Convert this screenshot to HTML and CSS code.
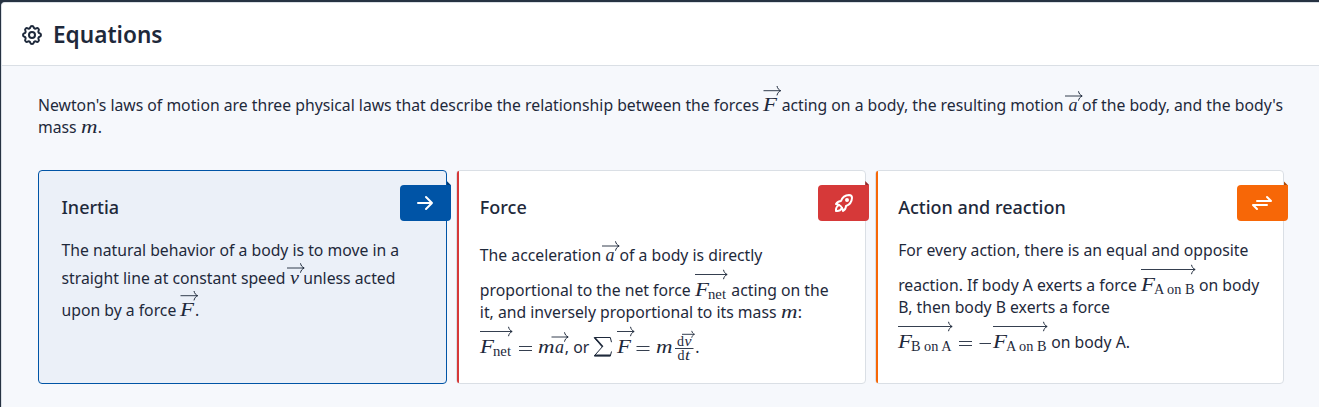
FILE: index.html
```html
<!DOCTYPE html>
<html lang="en">
<head>
<meta charset="utf-8">
<title>Equations</title>
<link rel="stylesheet" href="styles.css">
</head>
<body>
<svg class="defs" aria-hidden="true">
  <defs>
    <marker id="head" viewBox="0 0 6 12" refX="5.4" refY="6" markerWidth="6" markerHeight="12" markerUnits="userSpaceOnUse" orient="auto">
      <path d="M1.9 1.3C2.4 3.6 3.5 5.1 5.6 6C3.5 6.9 2.4 8.4 1.9 10.7" fill="none" stroke="#1e293b" stroke-width="1"/>
    </marker>
    <marker id="head-small" viewBox="0 0 6 12" refX="5.4" refY="6" markerWidth="4.4" markerHeight="8.8" markerUnits="userSpaceOnUse" orient="auto">
      <path d="M1.9 1.3C2.4 3.6 3.5 5.1 5.6 6C3.5 6.9 2.4 8.4 1.9 10.7" fill="none" stroke="#1e293b" stroke-width="1.2"/>
    </marker>
  </defs>
</svg>
<main class="panel">
  <header class="panel-header">
    <svg class="icon" viewBox="0 0 24 24"><path d="M10.325 4.317c.426 -1.756 2.924 -1.756 3.35 0a1.724 1.724 0 0 0 2.573 1.066c1.543 -.94 3.31 .826 2.37 2.37a1.724 1.724 0 0 0 1.065 2.572c1.756 .426 1.756 2.924 0 3.35a1.724 1.724 0 0 0 -1.066 2.573c.94 1.543 -.826 3.31 -2.37 2.37a1.724 1.724 0 0 0 -2.572 1.065c-.426 1.756 -2.924 1.756 -3.35 0a1.724 1.724 0 0 0 -2.573 -1.066c-1.543 .94 -3.31 -.826 -2.37 -2.37a1.724 1.724 0 0 0 -1.065 -2.572c-1.756 -.426 -1.756 -2.924 0 -3.35a1.724 1.724 0 0 0 1.066 -2.573c-.94 -1.543 .826 -3.31 2.37 -2.37c1 .608 2.296 .07 2.572 -1.065"/><circle cx="12" cy="12" r="3"/></svg>
    <h1>Equations</h1>
  </header>
  <div class="panel-body">
    <p class="intro">
      <span class="line">Newton's laws of motion are three physical laws that describe the relationship between the forces <svg class="math w-f"><text class="v" x="0" y="12" textLength="14">F</text><path class="arrow" d="M.5 -8.3H17.5"/></svg> acting on a body, the resulting motion <svg class="math w-a"><text class="v" x=".5" y="12" textLength="9">a</text><path class="arrow" d="M-3 -3H14"/></svg> of the body, and the body's</span>
      <span class="line">mass <svg class="math w-m"><text class="v" x="0" y="12" textLength="16.5">m</text></svg>.</span>
    </p>
    <div class="cards">
      <section class="card active">
        <div class="ribbon blue"><svg class="icon" viewBox="0 0 24 24"><path d="M5 12h14M13 18l6 -6M13 6l6 6"/></svg></div>
        <h2>Inertia</h2>
        <p>
          <span class="line">The natural behavior of a body is to move in a</span>
          <span class="line gap6">straight line at constant speed <svg class="math w-v"><text class="v" x="0" y="12" textLength="9">v</text><path class="arrow" d="M-3 -4H14"/></svg> unless acted</span>
          <span class="line gap10">upon by a force <svg class="math w-f"><text class="v" x="0" y="12" textLength="14">F</text><path class="arrow" d="M.5 -8.3H17.5"/></svg>.</span>
        </p>
      </section>
      <section class="card red-edge">
        <div class="ribbon red"><svg class="icon" viewBox="0 0 24 24"><path d="M4 13a8 8 0 0 1 7 7a6 6 0 0 0 3 -5a9 9 0 0 0 6 -8a3 3 0 0 0 -3 -3a9 9 0 0 0 -8 6a6 6 0 0 0 -5 3"/><path d="M7 14a6 6 0 0 0 -3 6a6 6 0 0 0 6 -3"/><circle cx="15" cy="9" r="1"/></svg></div>
        <h2>Force</h2>
        <p>
          <span class="line gap5">The acceleration <svg class="math w-a"><text class="v" x=".5" y="12" textLength="9">a</text><path class="arrow" d="M-3 -3H14"/></svg> of a body is directly</span>
          <span class="line gap13">proportional to the net force <svg class="math w-fnet"><text class="v" x="0" y="12" textLength="14">F</text><text class="s" x="13" y="15" textLength="18">net</text><path class="arrow" d="M0 -9.5H32"/></svg> acting on the</span>
          <span class="line">it, and inversely proportional to its mass <svg class="math w-m"><text class="v" x="0" y="12" textLength="16.5">m</text></svg>:</span>
          <span class="line gap13"><svg class="math w-net-eq"><text class="v" x="0" y="12" textLength="14">F</text><text class="s" x="13" y="15" textLength="18">net</text><path class="arrow" d="M0 -9.5H32"/><path class="rule" d="M39 5.5H52M39 9.5H52"/><text class="v" x="58" y="12" textLength="16.5">m</text><text class="v" x="75" y="12" textLength="9">a</text><path class="arrow" d="M71.5 -4H88"/></svg>, or <svg class="math w-sum"><path class="sigma" d="M18.5 1.2L17.3 -3.5H1.2L9.3 5.8L1.2 15H17.3L18.5 10.5"/><path class="sigma-bold" d="M1.8 -3.2L9.8 5.8M1.8 14.4H17.5"/><text class="v" x="24" y="12" textLength="14">F</text><path class="arrow" d="M24 -9.5H41"/><path class="rule" d="M43.5 5.5H56.5M43.5 9.5H56.5"/><text class="v" x="63" y="12" textLength="16.5">m</text><text class="s" x="84" y="4.8" textLength="7">d</text><text class="sv" x="91.5" y="4.8" textLength="7">v</text><path class="arrow small" d="M89 -6.7H101.3"/><path class="rule" d="M82 7.5H100.5"/><text class="s" x="84.5" y="18.8" textLength="7">d</text><text class="sv" x="92" y="18.8" textLength="5">t</text></svg>.</span>
        </p>
      </section>
      <section class="card orange-edge">
        <div class="ribbon orange"><svg class="icon" viewBox="0 0 24 24"><path d="M7 10h14l-4 -4M17 14h-14l4 4"/></svg></div>
        <h2>Action and reaction</h2>
        <p>
          <span class="line">For every action, there is an equal and opposite</span>
          <span class="line gap13">reaction. If body A exerts a force <svg class="math w-fab"><text class="v" x="0" y="12" textLength="14">F</text><text class="s" x="13" y="15" textLength="40.5">A on B</text><path class="arrow" d="M0 -9.5H54"/></svg> on body</span>
          <span class="line">B, then body B exerts a force</span>
          <span class="line gap13"><svg class="math w-fba"><text class="v" x="0" y="12" textLength="14">F</text><text class="s" x="13" y="15" textLength="40.5">B on A</text><path class="arrow" d="M0 -9.5H54"/><path class="rule" d="M61 5.5H74M61 9.5H74M81.5 7.5H93"/><text class="v" x="95" y="12" textLength="14">F</text><text class="s" x="108" y="15" textLength="40.5">A on B</text><path class="arrow" d="M95 -9.5H149"/></svg> on body A.</span>
        </p>
      </section>
    </div>
  </div>
</main>
<script src="math.js"></script>
</body>
</html>
```
FILE: math.js
```js
// Stretch the glyphs themselves, not only the gaps, to each symbol's measured width.
document.querySelectorAll('.math text').forEach(function (t) {
  t.setAttribute('lengthAdjust', 'spacingAndGlyphs');
});
```
FILE: styles.css
```css
* { box-sizing: border-box; }
body {
  margin: 0;
  padding: 2px 0 0 1px;
  height: 407px;
  overflow: hidden;
  background: #263242;
  color: #1e293b;
  font: 15.75px/22px "Noto Sans", sans-serif;
}
.defs { position: absolute; width: 0; height: 0; }
.panel {
  height: 405px;
  background: #f6f8fc;
  border-left: 1px solid #dadfe5;
  border-top: 1px solid #dadfe5;
  border-top-left-radius: 4px;
  overflow: hidden;
}
.panel-header {
  display: flex;
  align-items: center;
  gap: 9px;
  height: 63px;
  padding: 1px 18px 0;
  background: #fff;
  border-bottom: 1px solid #dadfe5;
}
h1 { margin: 0; font-size: 22.6px; line-height: 32px; font-weight: 600; }
.icon {
  display: block;
  width: 24px;
  height: 24px;
  fill: none;
  stroke: currentColor;
  stroke-width: 2;
  stroke-linecap: round;
  stroke-linejoin: round;
}
.panel-body { padding: 28px 35px 0 36px; }
p { margin: 0; }
.line { display: block; height: 22px; white-space: nowrap; box-sizing: content-box; }
.gap5 { padding-top: 5px; }
.gap6 { padding-top: 6px; }
.gap10 { padding-top: 10px; }
.gap13 { padding-top: 13px; }
.intro { height: 76px; }
.cards { display: grid; grid-template-columns: repeat(3, minmax(0, 1fr)); gap: 9px; }
.card {
  position: relative;
  height: 214px;
  padding: 24px 22px 0 22.5px;
  background: #fff;
  border: 1px solid #dadfe5;
  border-radius: 4px;
}
.card.active { background: #ebf0f8; border-color: #0054a6; }
.red-edge::before,
.orange-edge::before {
  content: "";
  position: absolute;
  top: 0;
  bottom: 0;
  left: 0;
  width: 2px;
  border-radius: 2px 0 0 2px;
  background: #d63939;
}
.orange-edge::before { background: #f76707; }
h2 { margin: 0 0 20px; font-size: 18px; line-height: 24px; font-weight: 500; }
.ribbon {
  position: absolute;
  top: 14px;
  right: -4.5px;
  display: flex;
  align-items: center;
  justify-content: center;
  width: 51px;
  height: 36px;
  border-radius: 4px 0 4px 4px;
  color: #fff;
}
.ribbon::before {
  content: "";
  position: absolute;
  right: 0;
  bottom: 100%;
  width: 4px;
  height: 4px;
  background: inherit;
  filter: brightness(.7);
  clip-path: polygon(0 0, 100% 100%, 0 100%);
}
.blue { background: #0054a6; }
.red { background: #d63939; }
.orange { background: #f76707; }

/* Formula boxes sit with their bottom edge on the text baseline. */
.math { display: inline-block; height: 12px; overflow: visible; vertical-align: baseline; fill: #1e293b; }
.math text { font-family: "Liberation Serif", serif; }
.math .v { font-size: 19.4px; font-style: italic; }
.math .s { font-size: 13.6px; }
.math .sv { font-size: 13.6px; font-style: italic; }
.arrow { fill: none; stroke: #1e293b; stroke-width: .9; marker-end: url(#head); }
.arrow.small { marker-end: url(#head-small); }
.rule { fill: none; stroke: #1e293b; stroke-width: .9; }
.sigma { fill: none; stroke: #1e293b; stroke-width: 1; }
.sigma-bold { fill: none; stroke: #1e293b; stroke-width: 1.7; }
.w-f { width: 14.5px; }
.w-a { width: 10.2px; }
.w-v { width: 9.4px; }
.w-m { width: 17px; }
.w-fnet { width: 32.5px; }
.w-net-eq { width: 85px; }
.w-sum { width: 102px; }
.w-fab { width: 54px; }
.w-fba { width: 149px; }
```
